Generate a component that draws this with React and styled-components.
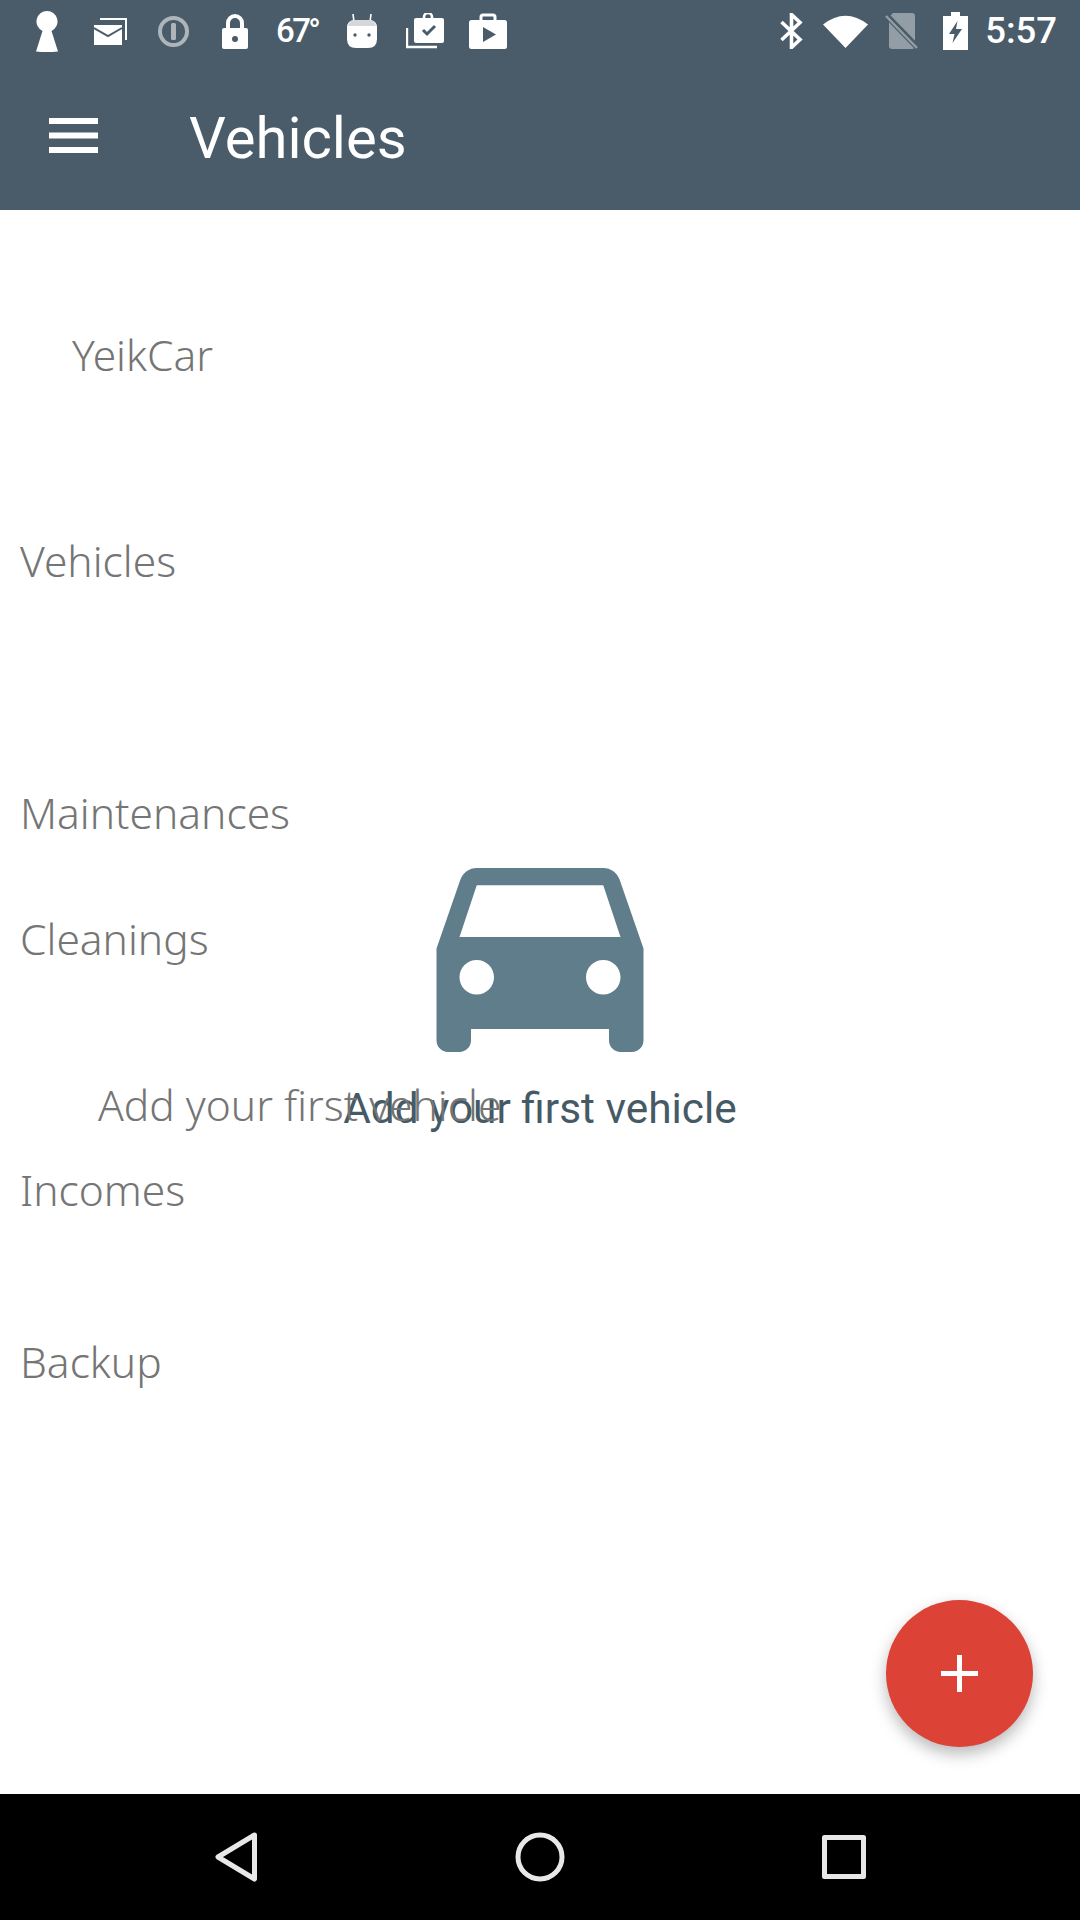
import React from 'react';
import styled, { createGlobalStyle } from 'styled-components';

const Global = createGlobalStyle`
  html, body { margin: 0; padding: 0; background: #fff; }
  * { box-sizing: border-box; }
`;

const Screen = styled.div`
  width: 1080px;
  height: 1920px;
  display: flex;
  flex-direction: column;
  overflow: hidden;
  background: #fff;
  font-family: Roboto, "Liberation Sans", sans-serif;
`;

const Header = styled.header`
  height: 210px;
  flex: none;
  background: #4a5c69;
  color: #fff;
`;

const StatusBar = styled.div`
  height: 64px;
  padding: 0 23px 2px 36px;
  display: flex;
  align-items: center;
  justify-content: space-between;
`;

const StatusGroup = styled.div`
  display: flex;
  align-items: center;
`;

const StatusSvg = styled.svg`
  display: block;
  flex: none;
  margin-left: ${(p) => p.$gap || 0}px;
  opacity: ${(p) => p.$dim || 1};
`;

const StatusText = styled.span`
  margin-left: ${(p) => p.$gap}px;
  font-size: ${(p) => p.$size}px;
  letter-spacing: ${(p) => p.$track || 0}px;
  font-weight: 500;
  line-height: 40px;
`;

const TitleRow = styled.div`
  height: 146px;
  padding: 0 0 4px 49px;
  display: flex;
  align-items: center;
`;

const Title = styled.h1`
  margin: 6px 0 0 91px;
  font-size: 58px;
  font-weight: 400;
  line-height: 70px;
`;

const Content = styled.main`
  flex: 1;
  position: relative;
  display: grid;
  grid-template: 1fr / 1fr;
`;

const DrawerList = styled.div`
  grid-area: 1 / 1;
  display: flex;
  flex-direction: column;
`;

const DrawerItem = styled.div`
  margin-top: ${(p) => p.$top}px;
  padding-left: ${(p) => p.$indent || 20}px;
  font-family: "Noto Sans", sans-serif;
  font-size: 42.5px;
  font-weight: 300;
  line-height: 56px;
  color: #757575;
`;

const EmptyState = styled.div`
  grid-area: 1 / 1;
  padding-top: 658px;
  display: flex;
  flex-direction: column;
  align-items: center;
`;

const EmptyText = styled.div`
  margin-top: 29px;
  font-size: 42.4px;
  line-height: 56px;
  color: #455a64;
`;

const Fab = styled.button`
  position: absolute;
  right: 47px;
  bottom: 47px;
  width: 147px;
  height: 147px;
  padding: 0;
  border: 0;
  border-radius: 50%;
  background: #dd4237;
  box-shadow: 0 7px 16px rgba(0, 0, 0, 0.28);
  display: flex;
  align-items: center;
  justify-content: center;
`;

const NavBar = styled.nav`
  height: 126px;
  flex: none;
  background: #000;
  display: grid;
  grid-template-columns: repeat(3, 304px);
  justify-content: center;
  justify-items: center;
  align-items: center;
`;

const bg = '#4a5c69';

function Keyhole() {
  return (
    <StatusSvg width="22" height="41" viewBox="0 0 22 41" fill="#fff">
      <path d="M11 0a10.5 10.5 0 0 1 4.5 20L22 40.5q-11 1-22 0L6.5 20A10.5 10.5 0 0 1 11 0z" />
    </StatusSvg>
  );
}

function MailStack() {
  return (
    <StatusSvg $gap={36} width="33" height="27" viewBox="0 0 33 27">
      <path d="M6 1h26v21" fill="none" stroke="#fff" strokeWidth="2" />
      <rect x="0" y="7" width="28" height="20" fill="#fff" />
      <path d="M0 10l14 8 14-8" fill="none" stroke={bg} strokeWidth="2" />
    </StatusSvg>
  );
}

function InfoCircle() {
  return (
    <StatusSvg $gap={31} $dim={0.55} width="31" height="31" viewBox="0 0 31 31">
      <circle cx="15.5" cy="15.5" r="13.5" fill="none" stroke="#fff" strokeWidth="4" />
      <rect x="13" y="7" width="5" height="17" rx="1.5" fill="#fff" />
    </StatusSvg>
  );
}

function Lock() {
  return (
    <StatusSvg $gap={33} width="26" height="35" viewBox="0 0 26 35">
      <path d="M6 15V9a7 7 0 0 1 14 0v6" fill="none" stroke="#fff" strokeWidth="4" />
      <rect y="14" width="26" height="21" rx="2" fill="#fff" />
      <circle cx="13" cy="25" r="3" fill={bg} />
    </StatusSvg>
  );
}

function AndroidHead() {
  return (
    <StatusSvg $gap={29} width="30" height="36" viewBox="0 0 30 36">
      <path d="M7 9L6 1M23 9l1-8" stroke="#fff" strokeWidth="1.6" fill="none" />
      <path d="M8 7h14q8 0 8 8v11q0 9-9 9H9q-9 0-9-9V15q0-8 8-8z" fill="#fff" />
      <path d="M1 13q1-6 7-6h14q6 0 7 6z" fill="#d5d8da" />
      <circle cx="8" cy="22" r="1.7" fill={bg} />
      <circle cx="22" cy="22" r="1.7" fill={bg} />
    </StatusSvg>
  );
}

function CheckCase() {
  return (
    <StatusSvg $gap={29} width="38" height="36" viewBox="0 0 38 36">
      <path d="M1 15v19h30" fill="none" stroke="#fff" strokeWidth="2.4" />
      <path d="M18 5V4a4 4 0 0 1 8 0v1" fill="none" stroke="#fff" strokeWidth="2.6" />
      <rect x="8" y="5" width="30" height="25" rx="2" fill="#fff" />
      <path d="M17 17l4 4 8-8" fill="none" stroke={bg} strokeWidth="3" />
    </StatusSvg>
  );
}

function PlayBag() {
  return (
    <StatusSvg $gap={25} width="38" height="36" viewBox="0 0 38 36">
      <path d="M12 8V4q0-2 2-2h10q2 0 2 2v4" fill="none" stroke="#fff" strokeWidth="3" />
      <rect y="7" width="38" height="29" rx="2.5" fill="#fff" />
      <path d="M14 14l13 7.5L14 29z" fill={bg} />
    </StatusSvg>
  );
}

function Bluetooth() {
  return (
    <StatusSvg width="23" height="36" viewBox="0 0 23 36">
      <path d="M1.5 9L20 26.5 11.5 34.5V1.5L20 9.5 1.5 27" fill="none" stroke="#fff" strokeWidth="3.6" />
    </StatusSvg>
  );
}

function Wifi() {
  return (
    <StatusSvg $gap={20} width="45" height="34" viewBox="0 0 45 34" fill="#fff">
      <path d="M0 10.5Q22.5-7 45 10.5L22.5 34z" />
    </StatusSvg>
  );
}

function NoSim() {
  return (
    <StatusSvg $gap={17} $dim={0.4} width="33" height="36" viewBox="0 0 33 36">
      <path d="M8 0h19q3 0 3 3v30q0 3-3 3H7q-3 0-3-3V4z" fill="#fff" />
      <path d="M0 1l33 34" stroke={bg} strokeWidth="6" />
      <path d="M1 3l31 32" stroke="#fff" strokeWidth="2.5" />
    </StatusSvg>
  );
}

function Battery() {
  return (
    <StatusSvg $gap={25} width="25" height="38" viewBox="0 0 25 38">
      <path d="M8 0h9v4h8v34H0V4h8z" fill="#fff" />
      <path d="M14.5 9L6 22h5.5l-2 9L19 17h-6z" fill={bg} />
    </StatusSvg>
  );
}

function Hamburger() {
  return (
    <svg width="49" height="35" viewBox="0 0 49 35" fill="#fff" style={{ flex: 'none' }}>
      <rect width="49" height="6" />
      <rect y="14.5" width="49" height="6" />
      <rect y="29" width="49" height="6" />
    </svg>
  );
}

function Car() {
  return (
    <svg width="208" height="184" viewBox="3 5 18 16" fill="#607d8b" style={{ display: 'block' }}>
      <path d="M18.92 6.01C18.72 5.42 18.16 5 17.5 5h-11c-.66 0-1.21.42-1.42 1.01L3 12v8c0 .55.45 1 1 1h1c.55 0 1-.45 1-1v-1h12v1c0 .55.45 1 1 1h1c.55 0 1-.45 1-1v-8l-2.08-5.99zM6.5 16c-.83 0-1.5-.67-1.5-1.5S5.67 13 6.5 13s1.5.67 1.5 1.5S7.33 16 6.5 16zm11 0c-.83 0-1.5-.67-1.5-1.5s.67-1.5 1.5-1.5 1.5.67 1.5 1.5-.67 1.5-1.5 1.5zM5 11l1.5-4.5h11L19 11H5z" />
    </svg>
  );
}

const drawerItems = [
  { label: 'YeikCar', top: 117, indent: 72 },
  { label: 'Vehicles', top: 150 },
  { label: 'Maintenances', top: 196 },
  { label: 'Cleanings', top: 70 },
  { label: 'Add your first vehicle', top: 110, indent: 98 },
  { label: 'Incomes', top: 29 },
  { label: 'Backup', top: 116 },
];

export default function App() {
  return (
    <Screen>
      <Global />
      <Header>
        <StatusBar>
          <StatusGroup>
            <Keyhole />
            <MailStack />
            <InfoCircle />
            <Lock />
            <StatusText $gap={28} $size={33} $track={-2.6}>67°</StatusText>
            <AndroidHead />
            <CheckCase />
            <PlayBag />
          </StatusGroup>
          <StatusGroup>
            <Bluetooth />
            <Wifi />
            <NoSim />
            <Battery />
            <StatusText $gap={17} $size={36.5}>5:57</StatusText>
          </StatusGroup>
        </StatusBar>
        <TitleRow>
          <Hamburger />
          <Title>Vehicles</Title>
        </TitleRow>
      </Header>

      <Content>
        <EmptyState>
          <Car />
          <EmptyText>Add your first vehicle</EmptyText>
        </EmptyState>
        <DrawerList>
          {drawerItems.map((item) => (
            <DrawerItem key={item.label} $top={item.top} $indent={item.indent}>
              {item.label}
            </DrawerItem>
          ))}
        </DrawerList>
        <Fab aria-label="Add vehicle">
          <svg width="37" height="37" viewBox="0 0 37 37" fill="#fff">
            <rect x="16" width="5" height="37" />
            <rect y="16" width="37" height="5" />
          </svg>
        </Fab>
      </Content>

      <NavBar>
        <svg width="43" height="50" viewBox="0 0 43 50" fill="none" stroke="#e8e8e8" strokeWidth="5" strokeLinejoin="round">
          <path d="M39.5 3L3 25l36.5 22z" />
        </svg>
        <svg width="50" height="50" viewBox="0 0 50 50" fill="none" stroke="#e8e8e8" strokeWidth="5">
          <circle cx="25" cy="25" r="22" />
        </svg>
        <svg width="44" height="44" viewBox="0 0 44 44" fill="none" stroke="#e8e8e8" strokeWidth="5" strokeLinejoin="round">
          <rect x="2.5" y="2.5" width="39" height="39" />
        </svg>
      </NavBar>
    </Screen>
  );
}
